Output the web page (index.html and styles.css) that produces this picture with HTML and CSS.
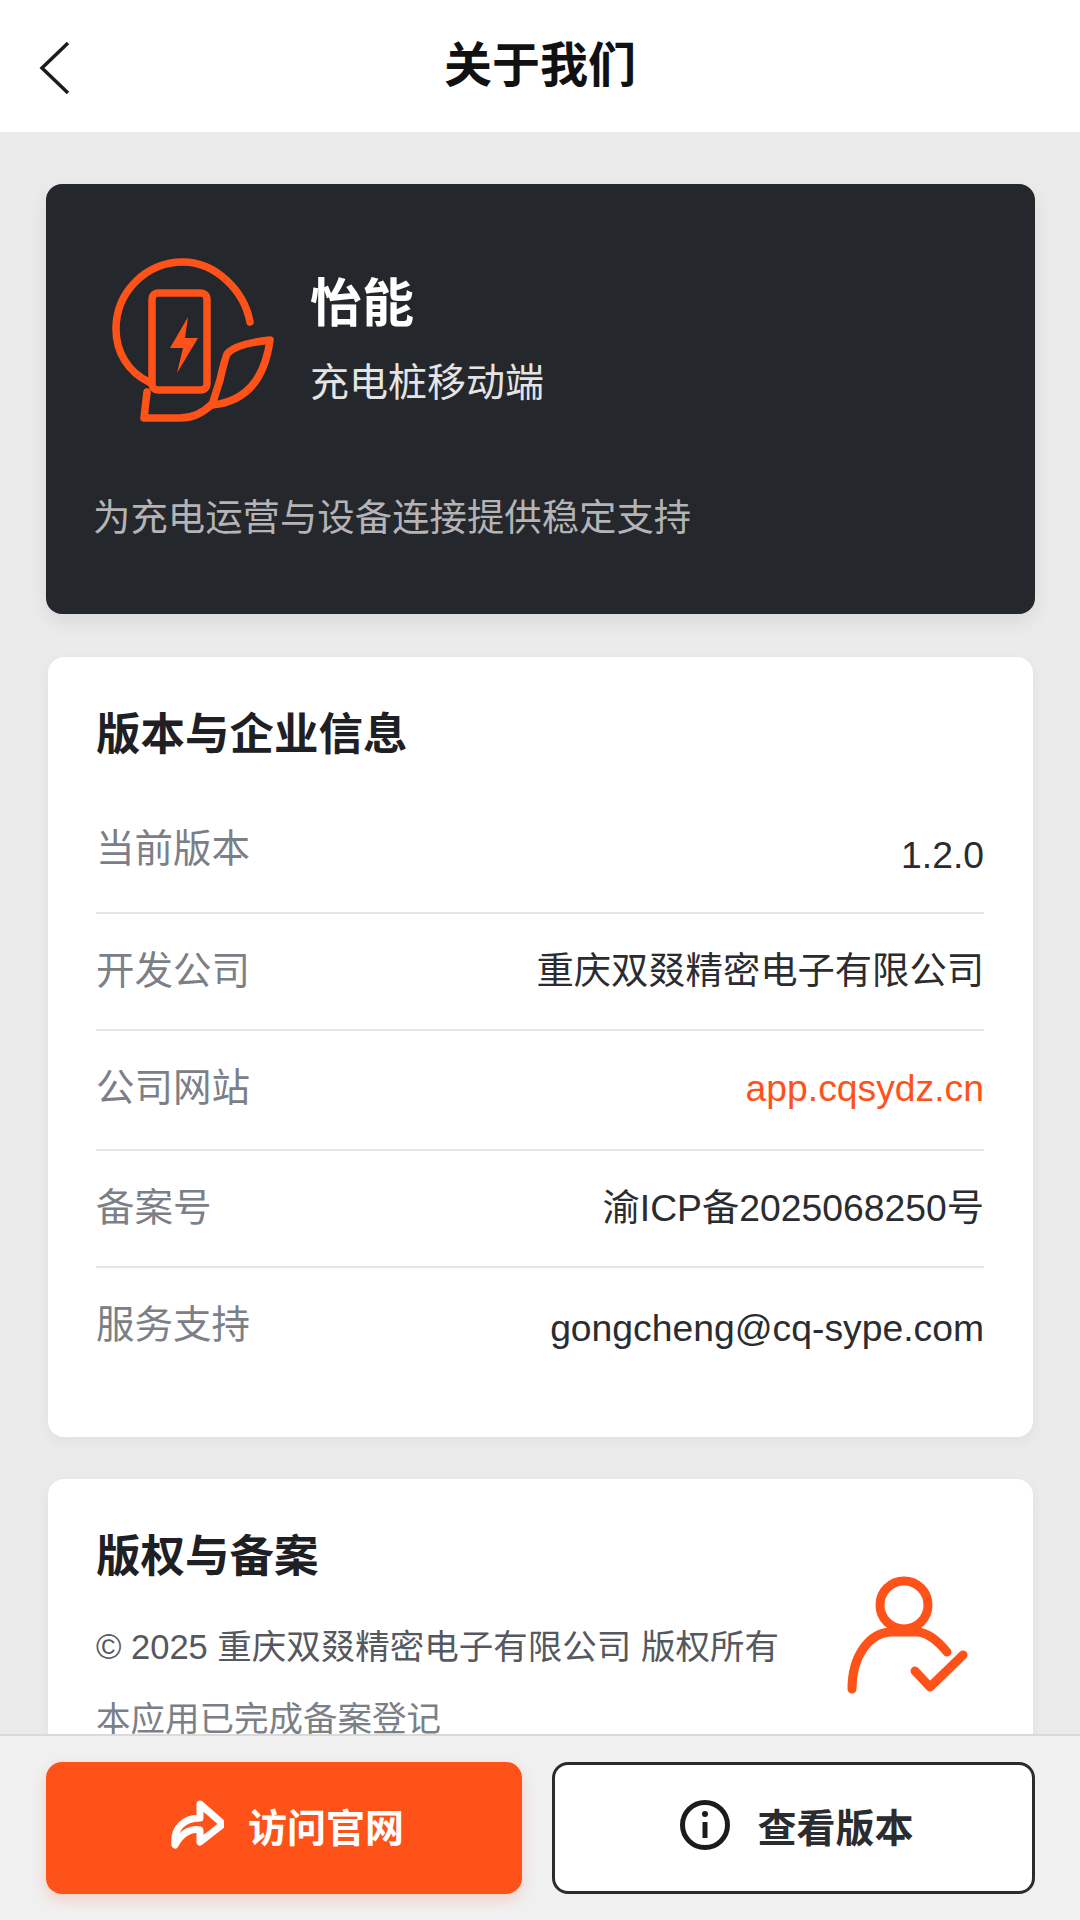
FILE: index.html
```html
<!DOCTYPE html>
<html lang="zh-CN">
<head>
    <meta charset="UTF-8">
    <meta name="viewport" content="width=device-width, initial-scale=1.0">
    <title>关于我们</title>
    <link rel="stylesheet" href="styles.css">
</head>
<body>
    <div class="page">
        <header class="topbar">
            <svg class="back" width="36" height="54" viewBox="0 0 36 54"><path d="M32 2 L6 27 L32 52" fill="none" stroke="#1c1c1e" stroke-width="3.5"/></svg>
            <h1>关于我们</h1>
        </header>

        <main class="content">
            <section class="hero">
                <div class="hero-top">
                    <svg class="logo" width="200" height="200" viewBox="0 0 200 200" fill="none" stroke="#ff5219" stroke-width="7.5" stroke-linecap="round" stroke-linejoin="round">
                        <path d="M160 82 C154 50 125 22 93 22 C56 22 26 52 26 89 C26 112 38 132 59 142"/>
                        <rect x="62" y="53" width="55" height="97" rx="6"/>
                        <path d="M98 77 L80 108 L93 108 L87 133 L108 98 L95 98 Z" fill="#ff5219" stroke="none"/>
                        <path d="M57 152 L54 178 L90 178 Q108 178 122 164"/>
                        <path d="M180 100 Q145 104 137 114 Q134 122 130 140 L122 165 Q172 160 180 100 Z"/>
                    </svg>
                    <div class="hero-name">
                        <div class="app-name">怡能</div>
                        <div class="app-sub">充电桩移动端</div>
                    </div>
                </div>
                <p class="hero-desc">为充电运营与设备连接提供稳定支持</p>
            </section>

            <section class="card info-card">
                <h2>版本与企业信息</h2>
                <div class="row row-first"><span class="label">当前版本</span><span class="value value-low">1.2.0</span></div>
                <div class="row"><span class="label">开发公司</span><span class="value">重庆双叕精密电子有限公司</span></div>
                <div class="row row-tall"><span class="label">公司网站</span><span class="value link">app.cqsydz.cn</span></div>
                <div class="row"><span class="label">备案号</span><span class="value">渝ICP备2025068250号</span></div>
                <div class="row"><span class="label">服务支持</span><span class="value value-mid">gongcheng@cq-sype.com</span></div>
            </section>

            <section class="card copy-card">
                <div class="copy-text">
                    <h2>版权与备案</h2>
                    <p class="copy-line">© 2025 重庆双叕精密电子有限公司 版权所有</p>
                    <p class="copy-note">本应用已完成备案登记</p>
                </div>
                <svg class="user-icon" width="160" height="160" viewBox="0 0 160 160" fill="none" stroke="#ff5219" stroke-width="9" stroke-linecap="round" stroke-linejoin="round">
                    <circle cx="84" cy="45" r="24"/>
                    <path d="M32 129 C32 95 50 73 70 72 L98 72 C108 73 118 81 127 92"/>
                    <path d="M95 111 L110 127 L143 95"/>
                </svg>
            </section>
        </main>

        <footer class="actions">
            <button class="btn btn-primary">
                <svg width="60" height="54" viewBox="-6 0 60 54" fill="none" stroke="#fff" stroke-width="7" stroke-linejoin="round" stroke-linecap="round"><path d="M5 47 C3 30 14 20 30 20 L30 6 L53 26 L30 44 L30 32 C22 30 12 34 5 47 Z"/></svg>
                访问官网
            </button>
            <button class="btn btn-outline">
                <svg width="52" height="52" viewBox="0 0 52 52" fill="none" stroke="#1c1c1e" stroke-width="5"><circle cx="26" cy="26" r="22.5"/><path d="M26 23 V39" stroke-width="5"/><circle cx="26" cy="15" r="3" fill="#1c1c1e" stroke="none"/></svg>
                查看版本
            </button>
        </footer>
    </div>
</body>
</html>
```

FILE: styles.css
```css
* {
    box-sizing: border-box;
}
body {
    margin: 0;
    font-family: "Liberation Sans", "Noto Sans CJK SC", sans-serif;
    background-color: #ebebeb;
    color: #1c1c1e;
}
h1, h2, p {
    margin: 0;
}
.page {
    display: flex;
    flex-direction: column;
    height: 1920px;
    overflow: hidden;
}
.topbar {
    flex: none;
    height: 132px;
    padding-bottom: 10px;
    background-color: #fff;
    display: flex;
    align-items: center;
    justify-content: center;
    position: relative;
}
.topbar h1 {
    font-size: 48px;
    font-weight: 700;
    color: #111;
}
.back {
    position: absolute;
    left: 36px;
    top: 41px;
}
.content {
    flex: 1;
    min-height: 0;
    overflow: hidden;
    padding: 52px 45px 0 46px;
}
.hero {
    height: 430px;
    background-color: #24272b;
    border-radius: 16px;
    box-shadow: 0 8px 20px rgba(0, 0, 0, 0.08);
    padding: 56px 48px 0 44px;
    color: #fff;
}
.hero-top {
    display: flex;
    align-items: flex-start;
}
.logo {
    flex: none;
}
.hero-name {
    margin-left: 20px;
    padding-top: 29px;
}
.app-name {
    font-size: 52px;
    font-weight: 700;
    line-height: 70px;
}
.app-sub {
    font-size: 39px;
    line-height: 56px;
    margin-top: 16px;
    color: #e4e4e4;
}
.hero-desc {
    font-size: 37.4px;
    line-height: 52px;
    color: #b4b4b6;
    margin-top: 52px;
    margin-left: 3px;
}
.card {
    background-color: #fff;
    border-radius: 16px;
    margin: 0 2px;
    box-shadow: 0 4px 14px rgba(0, 0, 0, 0.05);
    padding: 46px 49px 46px 48px;
}
.card h2 {
    font-size: 44.5px;
    font-weight: 700;
    line-height: 64px;
    color: #1f2023;
}
.info-card {
    margin-top: 43px;
    height: 780px;
}
.info-card h2 {
    margin-bottom: 25px;
}
.row {
    display: flex;
    justify-content: space-between;
    align-items: flex-start;
    height: 117px;
    padding-top: 35px;
    line-height: 44px;
    border-bottom: 2px solid #e4e6e8;
    font-size: 37.3px;
}
.row-first {
    height: 122px;
}
.row-tall {
    height: 120px;
}
.row:last-child {
    border-bottom: none;
}
.label {
    font-size: 38.5px;
    color: #7b8087;
}
.value {
    color: #2b2c30;
}
.value-low {
    margin-top: 6px;
}
.value-mid {
    margin-top: 3px;
}
.link {
    color: #ff5219;
}
.copy-card {
    margin-top: 42px;
    display: flex;
    justify-content: space-between;
    height: 330px;
}
.copy-line {
    font-size: 34.5px;
    line-height: 72px;
    margin-top: 22px;
    color: #55585e;
}
.copy-note {
    font-size: 34.5px;
    line-height: 72px;
    color: #7b8087;
}
.user-icon {
    flex: none;
    margin: 35px 4px 0 0;
}
.actions {
    flex: none;
    height: 186px;
    border-top: 2px solid #dadada;
    background-color: #f0f0f0;
    display: flex;
    gap: 30px;
    padding: 26px 45px 0 46px;
}
.btn {
    height: 132px;
    padding-bottom: 8px;
    border-radius: 16px;
    font-family: inherit;
    font-size: 39px;
    font-weight: 700;
    display: flex;
    align-items: center;
    justify-content: center;
}
.btn-primary {
    width: 476px;
    gap: 24px;
    background-color: #ff5219;
    color: #fff;
    border: none;
    box-shadow: 0 6px 14px rgba(255, 82, 25, 0.2);
}
.btn-outline {
    width: 483px;
    gap: 26px;
    padding-left: 12px;
    background-color: #fff;
    color: #2b2c30;
    border: 3px solid #2b2c30;
}
```
